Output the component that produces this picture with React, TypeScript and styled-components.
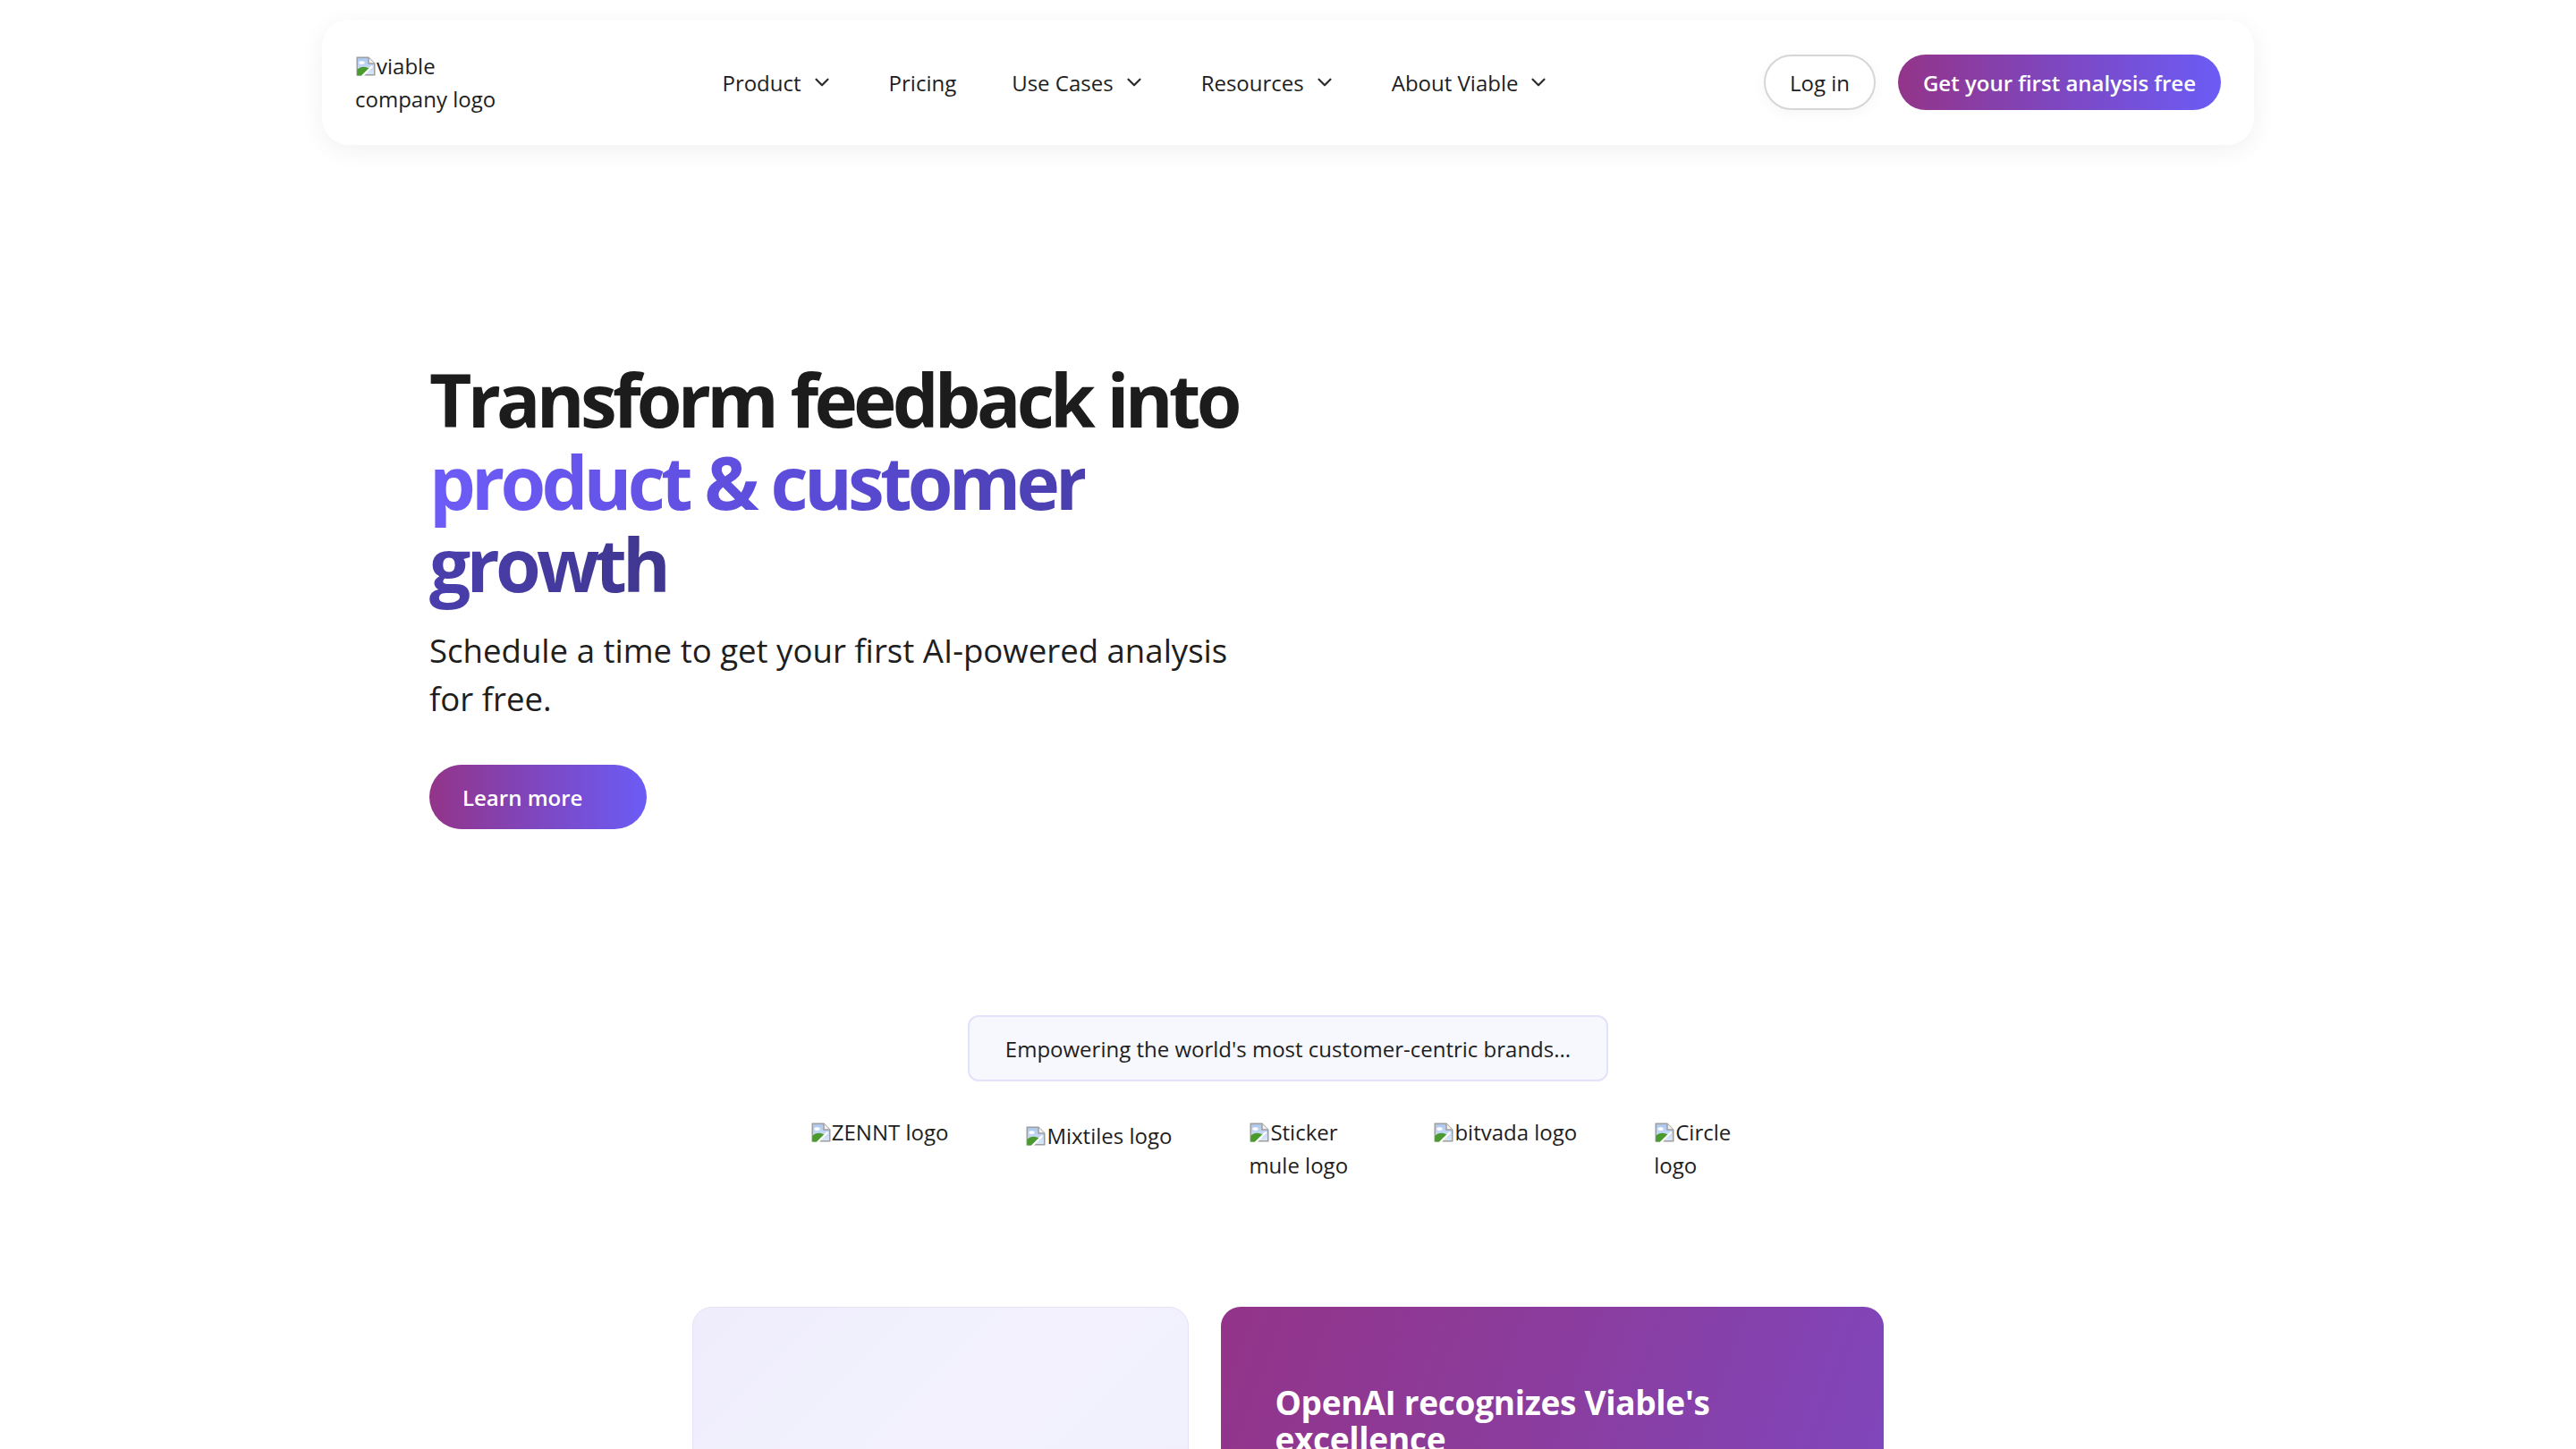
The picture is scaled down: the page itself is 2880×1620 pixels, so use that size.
import { ChevronDown } from 'lucide-react';
import styled, { createGlobalStyle } from 'styled-components';

const GlobalStyle = createGlobalStyle`
  html, body {
    margin: 0;
    padding: 0;
    background: #ffffff;
  }
  body {
    font-family: 'Open Sans', 'Noto Sans', sans-serif;
    color: #1e1e1e;
  }
  * {
    box-sizing: border-box;
  }
`;

const brandGradient = 'linear-gradient(90deg, #933489 0%, #7c49c6 55%, #6b5cf6 100%)';

const Page = styled.div`
  padding-top: 22px;
`;

const NavBar = styled.header`
  width: 2160px;
  height: 140px;
  margin: 0 auto;
  padding: 0 37px;
  display: flex;
  align-items: center;
  justify-content: space-between;
  background: #fff;
  border-radius: 30px;
  box-shadow: 0 6px 28px rgba(0, 0, 0, 0.06);
`;

const LogoAlt = styled.div`
  width: 175px;
  font-size: 24px;
  line-height: 37px;
  color: #1e1e1e;
`;

const NavLinks = styled.nav`
  display: flex;
  align-items: center;
  gap: 62px;
  margin-left: -3px;
`;

const NavItem = styled.a`
  display: flex;
  align-items: center;
  gap: 10px;
  font-size: 24px;
  color: #1e1e1e;
  text-decoration: none;
  cursor: pointer;

  svg {
    color: #2a2a2a;
  }
`;

const Actions = styled.div`
  display: flex;
  align-items: center;
  gap: 25px;
`;

const PillButton = styled.button<{ $variant?: 'ghost' | 'brand' }>`
  height: 62px;
  border-radius: 999px;
  font-family: inherit;
  font-size: 24px;
  cursor: pointer;
  white-space: nowrap;
  ${(p) =>
    p.$variant === 'brand'
      ? `
    padding: 0 28px;
    border: none;
    color: #fff;
    font-weight: 600;
    background: ${brandGradient};
  `
      : `
    padding: 0 27px;
    border: 2px solid #d6d6d6;
    color: #1e1e1e;
    font-weight: 400;
    background: #fff;
    box-shadow: 0 4px 16px rgba(0, 0, 0, 0.04);
  `}
`;

const Hero = styled.section`
  width: 1920px;
  margin: 0 auto;
  padding-top: 238px;
`;

const HeroText = styled.div`
  max-width: 920px;
`;

const Title = styled.h1`
  margin: 0;
  font-size: 82px;
  line-height: 92px;
  font-weight: 700;
  letter-spacing: -4.8px;
  word-spacing: 1px;
  color: #1c1c1c;
`;

const Accent = styled.span`
  background: linear-gradient(90deg, #6e5cf8 0%, #5a4bd6 45%, #4a3fae 72%, #3f368f 100%);
  -webkit-background-clip: text;
  background-clip: text;
  color: transparent;
`;

const Lead = styled.p`
  margin: 24px 0 0;
  font-size: 36.6px;
  line-height: 54px;
  color: #1e1e1e;
`;

const LearnButton = styled.button`
  margin-top: 47px;
  height: 72px;
  padding: 0 72px 0 37px;
  border: none;
  border-radius: 999px;
  background: ${brandGradient};
  color: #fff;
  font-family: inherit;
  font-size: 24px;
  font-weight: 600;
  cursor: pointer;
`;

const Brands = styled.section`
  margin-top: 208px;
  display: flex;
  flex-direction: column;
  align-items: center;
`;

const BrandsTag = styled.div`
  height: 74px;
  padding: 0 40px;
  display: flex;
  align-items: center;
  border: 2px solid #e3e2fb;
  border-radius: 12px;
  background: #f7f7fe;
  font-size: 24px;
  color: #1e1e1e;
`;

const LogoRow = styled.div`
  margin-top: 38px;
  display: flex;
  align-items: flex-start;
  gap: 86px;
`;

const BrandAlt = styled.div<{ $width?: number; $offset?: number }>`
  width: ${(p) => (p.$width ? `${p.$width}px` : 'auto')};
  margin-top: ${(p) => p.$offset ?? 0}px;
  font-size: 24px;
  line-height: 37px;
  color: #1e1e1e;
`;

const Cards = styled.section`
  width: 1332px;
  margin: 140px auto 0;
  display: grid;
  grid-template-columns: 3fr 4fr;
  gap: 36px;
`;

const SoftCard = styled.div`
  min-height: 520px;
  border-radius: 22px;
  border: 1px solid #e4e1f9;
  background: linear-gradient(135deg, #efedfc 0%, #f2f1fd 40%, #efedfc 100%);
`;

const BrandCard = styled.div`
  min-height: 520px;
  border-radius: 22px;
  padding: 86px 60px;
  background: linear-gradient(110deg, #933489 0%, #8a3d9f 45%, #7d49c5 100%);
`;

const CardTitle = styled.h2`
  margin: 0;
  font-size: 37px;
  line-height: 41px;
  font-weight: 700;
  letter-spacing: -0.3px;
  color: #fff;
`;

function BrokenImage() {
  return (
    <svg width="24" height="24" viewBox="0 0 16 16" style={{ verticalAlign: '-3px' }}>
      <defs>
        <linearGradient id="sky" x1="0" y1="0" x2="0" y2="1">
          <stop offset="0" stopColor="#a9c6ee" />
          <stop offset="1" stopColor="#dce8f9" />
        </linearGradient>
      </defs>
      <path d="M1.5 1.5h8.5l4.5 4.5v8.5h-13z" fill="url(#sky)" stroke="#9e9e9e" />
      <path d="M10 1.5v4.5h4.5" fill="#f2f2f2" stroke="#9e9e9e" />
      <ellipse cx="5" cy="5.4" rx="2.1" ry="1.3" fill="#fff" />
      <path d="M1.5 15V10.6C4 8 8 7.8 11.4 10.2L6.6 15z" fill="#4a9a2f" />
      <path d="M5.2 15.6L13 7.8" stroke="#fff" strokeWidth="1.5" />
    </svg>
  );
}

const navLinks = [
  { label: 'Product', menu: true },
  { label: 'Pricing', menu: false },
  { label: 'Use Cases', menu: true },
  { label: 'Resources', menu: true },
  { label: 'About Viable', menu: true },
];

const brands = [
  { alt: 'ZENNT logo', offset: 0 },
  { alt: 'Mixtiles logo', offset: 4 },
  { alt: 'Sticker mule logo', width: 120, offset: 0 },
  { alt: 'bitvada logo', offset: 0 },
  { alt: 'Circle logo', width: 125, offset: 0 },
];

export default function App() {
  return (
    <Page>
      <GlobalStyle />
      <NavBar>
        <LogoAlt>
          <BrokenImage />
          viable company logo
        </LogoAlt>
        <NavLinks>
          {navLinks.map((link) => (
            <NavItem key={link.label}>
              {link.label}
              {link.menu && <ChevronDown size={26} strokeWidth={2} />}
            </NavItem>
          ))}
        </NavLinks>
        <Actions>
          <PillButton $variant="ghost">Log in</PillButton>
          <PillButton $variant="brand">Get your first analysis free</PillButton>
        </Actions>
      </NavBar>

      <Hero>
        <HeroText>
          <Title>
            Transform feedback into <Accent>product &amp; customer growth</Accent>
          </Title>
          <Lead>Schedule a time to get your first AI-powered analysis for free.</Lead>
          <LearnButton>Learn more</LearnButton>
        </HeroText>
      </Hero>

      <Brands>
        <BrandsTag>Empowering the world's most customer-centric brands...</BrandsTag>
        <LogoRow>
          {brands.map((b) => (
            <BrandAlt key={b.alt} $width={b.width} $offset={b.offset}>
              <BrokenImage />
              {b.alt}
            </BrandAlt>
          ))}
        </LogoRow>
      </Brands>

      <Cards>
        <SoftCard />
        <BrandCard>
          <CardTitle>OpenAI recognizes Viable's excellence</CardTitle>
        </BrandCard>
      </Cards>
    </Page>
  );
}
